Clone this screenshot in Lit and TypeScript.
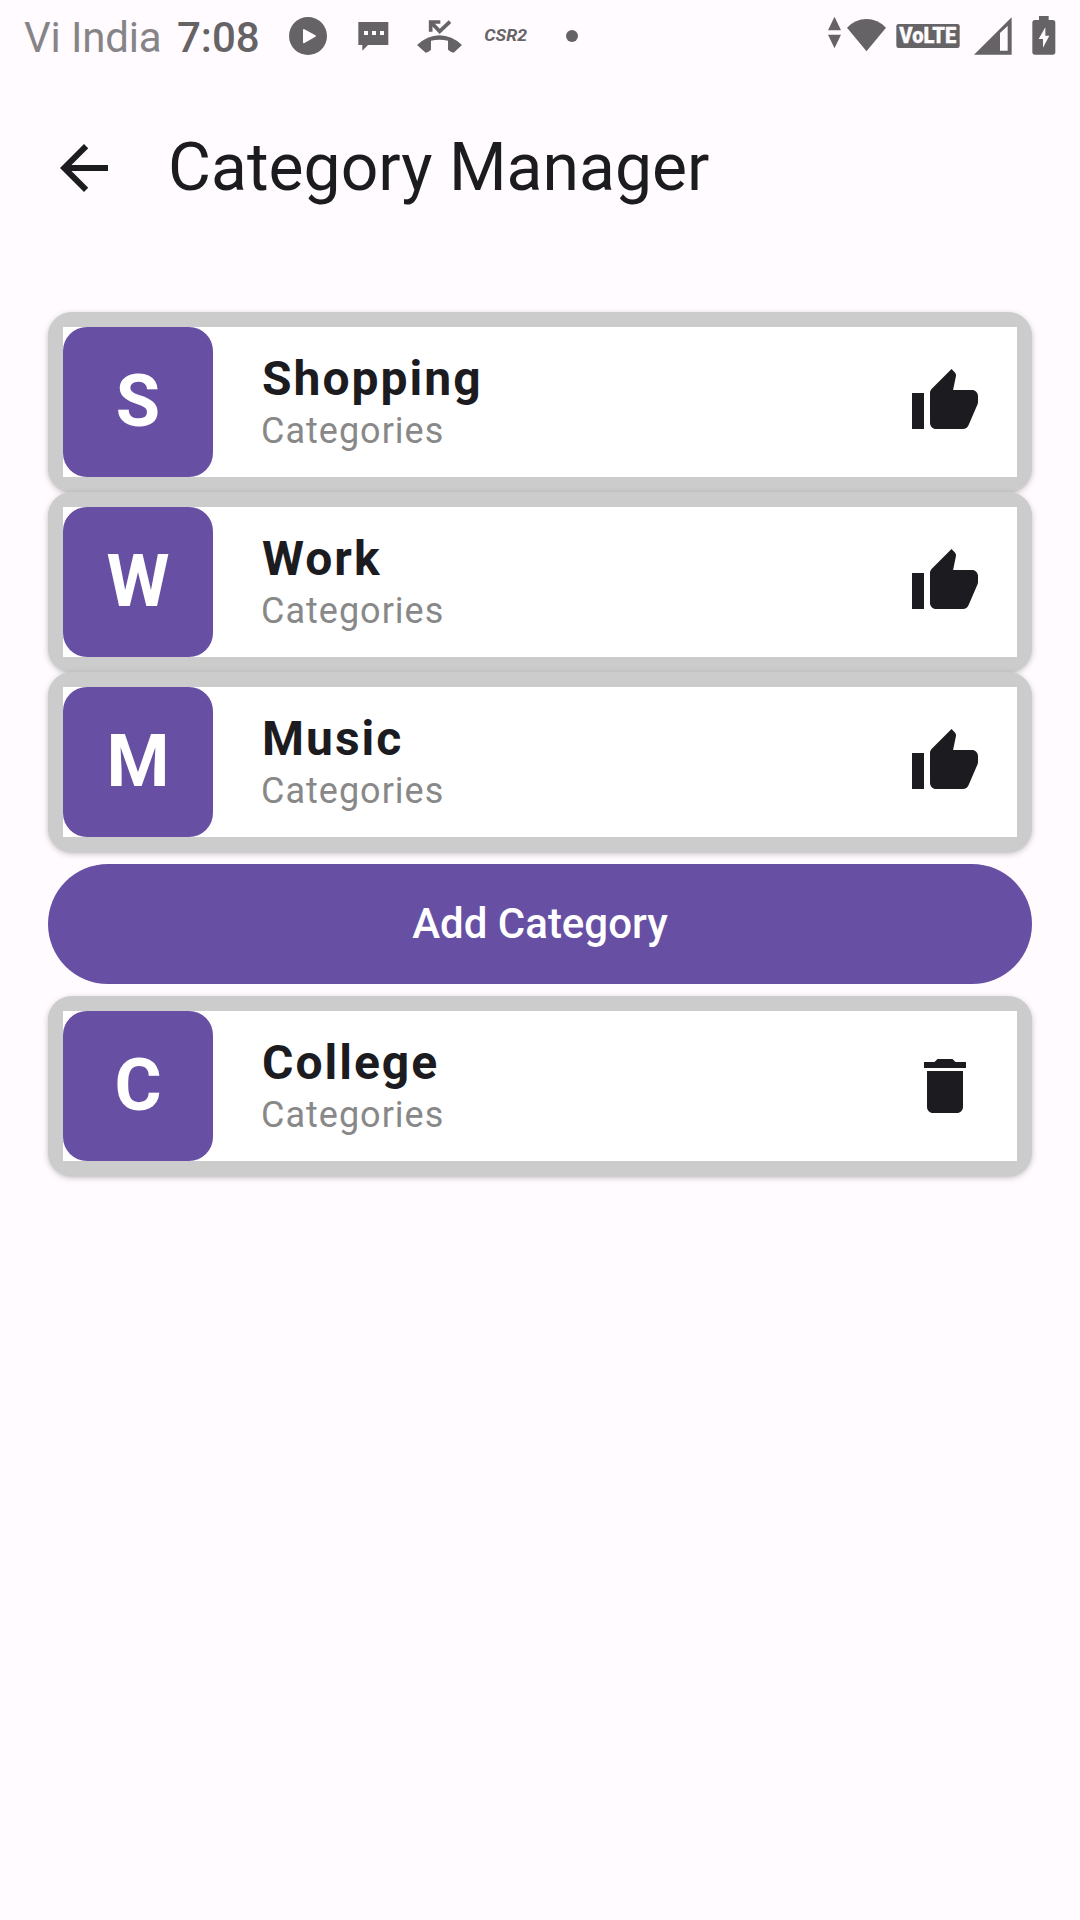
import { LitElement, html, css, svg } from "lit";
import { customElement, property } from "lit/decorators.js";

type Action = "like" | "delete";

interface Category {
  name: string;
  action: Action;
}

const ACTION_PATHS: Record<Action, string> = {
  like: "M1 21h4V9H1v12zm22-11c0-1.1-.9-2-2-2h-6.31l.95-4.57.03-.32c0-.41-.17-.79-.44-1.06L14.17 1 7.59 7.59C7.22 7.95 7 8.45 7 9v10c0 1.1.9 2 2 2h9c.83 0 1.54-.5 1.84-1.22l3.02-7.05c.09-.23.14-.47.14-.73v-2z",
  delete: "M6 19c0 1.1.9 2 2 2h8c1.1 0 2-.9 2-2V7H6v12zM19 4h-3.5l-1-1h-5l-1 1H5v2h14V4z",
};

@customElement("status-bar")
export class StatusBar extends LitElement {
  static styles = css`
    :host {
      display: flex;
      justify-content: space-between;
      align-items: center;
      height: 72px;
      padding: 0 24px;
      color: #666366;
      font-size: 42px;
      line-height: 72px;
    }
    .group {
      display: flex;
      align-items: center;
      height: 72px;
    }
    svg {
      display: block;
      height: 72px;
      fill: currentColor;
    }
    .carrier {
      width: 153px;
      padding-top: 3px;
      color: #868486;
      letter-spacing: -0.15px;
      white-space: nowrap;
    }
    .time {
      width: 112px;
      padding-top: 3px;
      font-weight: 500;
      white-space: nowrap;
    }
    .play { width: 38px; }
    .message { width: 31px; margin-left: 31px; }
    .missed { width: 46px; margin-left: 28px; }
    .game { width: 44px; margin-left: 21px; }
    .dot { width: 12px; margin-left: 38px; }
    .traffic { width: 14px; }
    .wifi { width: 40px; margin-left: 5px; }
    .volte { width: 64px; margin-left: 9px; }
    .signal { width: 38px; margin-left: 14px; }
    .battery { width: 24px; margin-left: 20px; }
    .label {
      font-family: Roboto, sans-serif;
      font-weight: 900;
    }
    .hole { fill: #fffbff; }
    .volte .label { stroke: #fffbff; stroke-width: 1; }
    .game .label { font-weight: 700; }
    .line { fill: none; stroke: currentColor; stroke-width: 11; }
  `;

  render() {
    return html`
      <div class="group">
        <span class="carrier">Vi India</span>
        <span class="time">7:08</span>
        <svg class="play" viewBox="0 0 38 72">
          <circle cx="19" cy="36" r="19" />
          <path class="hole" d="M14 30.2q0-1.6 1.4-.9l11 5.9q1.2.8 0 1.6l-11 6.3q-1.4.7-1.4-.9z" />
        </svg>
        <svg class="message" viewBox="-6 0 93 216">
          <path d="M-5 66H85V135H24L7 152V135H-5Z" />
          <path class="hole" d="M12 93h12v12H12zM36 93h12v12H36zM60 93h12v12H60z" />
        </svg>
        <svg class="missed" viewBox="171 0 138 216">
          <path class="line" d="M212 95V66H241M213 67L239 94L270 65" />
          <path d="M171 135Q202 107 238 106Q276 107 306 135L281 158Q272 156 264 149V122Q238 116 213 122V149Q206 156 197 158Z" />
        </svg>
        <svg class="game" viewBox="372 0 132 216">
          <text class="label" x="373" y="124" font-size="51" font-style="italic" textLength="128" lengthAdjust="spacingAndGlyphs">CSR2</text>
        </svg>
        <svg class="dot" viewBox="0 0 12 72"><circle cx="6" cy="36" r="6" /></svg>
      </div>
      <div class="group">
        <svg class="traffic" viewBox="84 0 42 216">
          <path d="M103.5 50L123 91H84ZM84 104H123L103.5 145Z" />
        </svg>
        <svg class="wifi" viewBox="141 0 120 216">
          <path d="M141 83Q166 57 199.5 57T258 83L199.5 154Z" />
        </svg>
        <svg class="volte" viewBox="288 0 192 216">
          <rect x="289" y="72" width="190" height="72" rx="7" />
          <text class="label hole" x="298" y="130" font-size="64" textLength="171" lengthAdjust="spacingAndGlyphs">VoLTE</text>
        </svg>
        <svg class="signal" viewBox="522 0 114 216">
          <path fill-rule="evenodd" d="M522 164L635 52V164ZM600 99V152H623V78Z" />
        </svg>
        <svg class="battery" viewBox="698 0 72 216">
          <path d="M719 60V48H748V60H760Q768 60 768 68V156Q768 164 760 164H707Q699 164 699 156V68Q699 60 707 60Z" />
          <path class="hole" d="M738 82L718 117H731V143L750 107H738Z" />
        </svg>
      </div>
    `;
  }
}

@customElement("category-card")
export class CategoryCard extends LitElement {
  @property() name = "";
  @property() action: Action = "like";

  static styles = css`
    :host {
      display: block;
      box-sizing: border-box;
      height: 180px;
      padding: 15px;
      border-radius: 24px;
      background: #cccccc;
      box-shadow: 0 2px 6px rgba(0, 0, 0, 0.22), 0 1px 2px rgba(0, 0, 0, 0.06);
    }
    .row {
      display: flex;
      align-items: center;
      height: 150px;
      background: #ffffff;
    }
    .avatar {
      display: flex;
      align-items: center;
      justify-content: center;
      width: 150px;
      height: 150px;
      border-radius: 24px;
      background: #6750a4;
      color: #ffffff;
      font-size: 72px;
      font-weight: 700;
      line-height: 84px;
    }
    .body {
      flex: 1;
      padding: 1px 0 0 48px;
    }
    .name {
      padding-left: 1px;
      font-size: 48px;
      font-weight: 700;
      line-height: 57px;
      letter-spacing: 2px;
      color: #1c1b1f;
    }
    .kind {
      font-size: 36px;
      line-height: 48px;
      letter-spacing: 1px;
      color: #888888;
    }
    .icon {
      display: block;
      width: 72px;
      height: 72px;
      margin-right: 36px;
      fill: #1c1b1f;
    }
  `;

  render() {
    return html`
      <div class="row">
        <div class="avatar">${this.name.charAt(0)}</div>
        <div class="body">
          <div class="name">${this.name}</div>
          <div class="kind">Categories</div>
        </div>
        <svg class="icon" viewBox="0 0 24 24">${svg`<path d=${ACTION_PATHS[this.action]} />`}</svg>
      </div>
    `;
  }
}

@customElement("app-root")
export class AppRoot extends LitElement {
  private defaults: Category[] = [
    { name: "Shopping", action: "like" },
    { name: "Work", action: "like" },
    { name: "Music", action: "like" },
  ];
  private custom: Category[] = [{ name: "College", action: "delete" }];

  static styles = css`
    :host {
      display: block;
      box-sizing: border-box;
      min-height: 1920px;
      background: #fffbff;
      font-family: Roboto, "Noto Sans", sans-serif;
      color: #1c1b1f;
    }
    .toolbar {
      display: flex;
      align-items: center;
      height: 192px;
      padding: 0 48px;
    }
    .back {
      display: block;
      width: 72px;
      height: 72px;
      fill: #1c1b1f;
    }
    .title {
      margin: 0 0 0 48px;
      font-size: 66px;
      font-weight: 400;
      line-height: 84px;
      letter-spacing: 0.03px;
      white-space: nowrap;
    }
    .content {
      display: flex;
      flex-direction: column;
      gap: 12px;
      padding: 48px 48px 0;
    }
    .add {
      height: 120px;
      border: 0;
      padding: 0;
      border-radius: 60px;
      background: #6750a4;
      color: #ffffff;
      font-family: inherit;
      font-size: 42px;
      font-weight: 500;
      line-height: 60px;
      letter-spacing: 0;
    }
  `;

  private cards(items: Category[]) {
    return html`<div class="list">
      ${items.map((c) => html`<category-card .name=${c.name} .action=${c.action}></category-card>`)}
    </div>`;
  }

  render() {
    return html`
      <status-bar></status-bar>
      <header class="toolbar">
        <svg class="back" viewBox="0 0 24 24">
          <path d="M20 11H7.83l5.59-5.59L12 4l-8 8 8 8 1.41-1.41L7.83 13H20v-2z" />
        </svg>
        <h1 class="title">Category Manager</h1>
      </header>
      <main class="content">
        ${this.cards(this.defaults)}
        <button class="add">Add Category</button>
        ${this.cards(this.custom)}
      </main>
    `;
  }
}
